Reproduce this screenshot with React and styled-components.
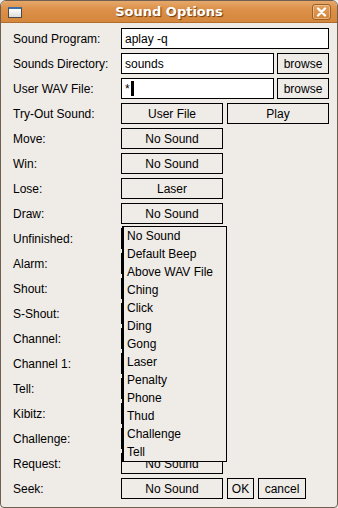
import React from "react";
import styled, { createGlobalStyle } from "styled-components";

const Global = createGlobalStyle`
  html, body { margin: 0; padding: 0; background: #efebe7; }
  body { font-family: "Liberation Sans", Arial, sans-serif; font-size: 12px; color: #000; }
`;

const Window = styled.div`
  position: relative;
  width: 338px;
  height: 508px;
  box-sizing: border-box;
  border: 1px solid #6e5f50;
  border-radius: 6px 6px 4px 4px;
  background: #efebe7;
  overflow: hidden;
  display: flex;
  flex-direction: column;
`;

const TitleBar = styled.div`
  height: 22px;
  flex: none;
  display: flex;
  align-items: center;
  padding: 0 6px 0 7px;
  background: linear-gradient(#e6a86a 0%, #dc9049 40%, #d4873c 100%);
  border-bottom: 1px solid #b26d2c;
  box-sizing: border-box;
`;

const WinIcon = styled.div`
  width: 14px;
  height: 11px;
  box-sizing: border-box;
  border: 1px solid #4a4a4a;
  border-top: 2px solid #3c6ea8;
  background: linear-gradient(#ffffff, #dcdcdc);
  flex: none;
  margin-top: 2px;
`;

const Title = styled.div`
  flex: 1;
  text-align: center;
  font-family: "DejaVu Sans", sans-serif;
  font-weight: bold;
  font-size: 13px;
  color: #fff;
  text-shadow: 1px 1px 1px #6b3d10;
  padding-left: 4px;
`;

const CloseBtn = styled.div`
  width: 19px;
  height: 16px;
  box-sizing: border-box;
  border: 1px solid #9c5f24;
  border-radius: 3px;
  background: linear-gradient(#e2a062, #d38436);
  box-shadow: inset 0 0 0 1px rgba(255, 230, 200, 0.45);
  display: flex;
  align-items: center;
  justify-content: center;
  flex: none;
`;

const Body = styled.div`
  position: relative;
  flex: 1;
  display: grid;
  grid-template-columns: 108px 208px;
  grid-auto-rows: 21px;
  row-gap: 4px;
  padding: 5px 8px 0 12px;
  align-content: start;
`;

const Label = styled.div`
  display: flex;
  align-items: center;
  white-space: nowrap;
  line-height: 14px;
`;

const Controls = styled.div`
  display: flex;
  gap: ${(p) => p.$gap ?? 4}px;
`;

const TextField = styled.div`
  box-sizing: border-box;
  width: ${(p) => p.$w}px;
  height: 21px;
  border: 1px solid #000;
  background: #fff;
  display: flex;
  align-items: center;
  padding-left: 3px;
  white-space: nowrap;
`;

const Cursor = styled.span`
  display: inline-block;
  width: 3px;
  height: 15px;
  background: #000;
  margin-left: 1px;
`;

const Button = styled.div`
  box-sizing: border-box;
  width: ${(p) => p.$w}px;
  height: 21px;
  border: 1px solid #000;
  background: #efebe7;
  display: flex;
  align-items: center;
  justify-content: center;
  white-space: nowrap;
`;

const Popup = styled.div`
  position: absolute;
  left: 121px;
  top: 203px;
  width: 105px;
  box-sizing: border-box;
  border: 1px solid #000;
  border-left-width: 2px;
  background: #efebe7;
  display: flex;
  flex-direction: column;
  z-index: 2;
`;

const MenuItem = styled.div`
  height: 18px;
  display: flex;
  align-items: center;
  padding-left: 3px;
  white-space: nowrap;
`;

const soundRows = [
  ["Move:", "No Sound"],
  ["Win:", "No Sound"],
  ["Lose:", "Laser"],
  ["Draw:", "No Sound"],
  ["Unfinished:", "No Sound"],
  ["Alarm:", "No Sound"],
  ["Shout:", "No Sound"],
  ["S-Shout:", "No Sound"],
  ["Channel:", "No Sound"],
  ["Channel 1:", "No Sound"],
  ["Tell:", "No Sound"],
  ["Kibitz:", "No Sound"],
  ["Challenge:", "No Sound"],
  ["Request:", "No Sound"],
];

const menuItems = [
  "No Sound",
  "Default Beep",
  "Above WAV File",
  "Ching",
  "Click",
  "Ding",
  "Gong",
  "Laser",
  "Penalty",
  "Phone",
  "Thud",
  "Challenge",
  "Tell",
];

export default function App() {
  return (
    <>
      <Global />
      <Window>
        <TitleBar>
          <WinIcon />
          <Title>Sound Options</Title>
          <CloseBtn>
            <svg width="11" height="10" viewBox="0 0 11 10">
              <path d="M2 1.5 L9 8.5 M9 1.5 L2 8.5" stroke="#fff" strokeWidth="2.4" strokeLinecap="round" />
            </svg>
          </CloseBtn>
        </TitleBar>
        <Body>
          <Label>Sound Program:</Label>
          <Controls>
            <TextField $w={208}>aplay -q</TextField>
          </Controls>

          <Label>Sounds Directory:</Label>
          <Controls $gap={3}>
            <TextField $w={153}>sounds</TextField>
            <Button $w={52}>browse</Button>
          </Controls>

          <Label>User WAV File:</Label>
          <Controls $gap={3}>
            <TextField $w={153}>
              *<Cursor />
            </TextField>
            <Button $w={52}>browse</Button>
          </Controls>

          <Label>Try-Out Sound:</Label>
          <Controls $gap={4}>
            <Button $w={102}>User File</Button>
            <Button $w={102}>Play</Button>
          </Controls>

          {soundRows.map(([label, value]) => (
            <React.Fragment key={label}>
              <Label>{label}</Label>
              <Controls>
                <Button $w={102}>{value}</Button>
              </Controls>
            </React.Fragment>
          ))}

          <Label>Seek:</Label>
          <Controls $gap={4}>
            <Button $w={102}>No Sound</Button>
            <Button $w={27}>OK</Button>
            <Button $w={48}>cancel</Button>
          </Controls>

          <Popup>
            {menuItems.map((m) => (
              <MenuItem key={m}>{m}</MenuItem>
            ))}
          </Popup>
        </Body>
      </Window>
    </>
  );
}
